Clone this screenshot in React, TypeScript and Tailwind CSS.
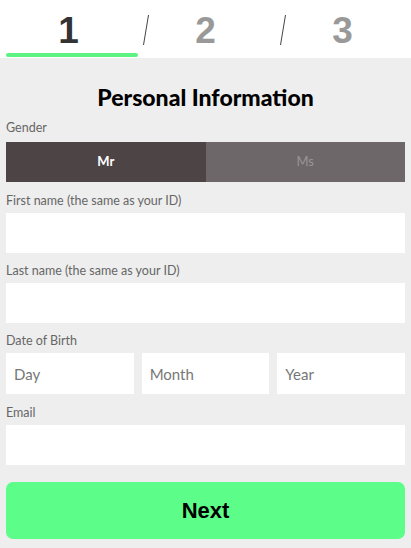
import React from 'react';

const labelCls = 'block text-[12.5px] leading-[16px] text-[#666] mb-[4px]';
const inputCls =
  'w-full h-[40px] bg-white px-[8px] text-[15px] text-[#333] placeholder:text-[#777] outline-none';

const App: React.FC = () => {
  return (
    <div className="w-[411px] min-h-[548px] bg-[#eeeeee] font-['Lato',sans-serif]">
      {/* step header */}
      <div className="relative h-[58px] bg-white grid grid-cols-3">
        {['1', '2', '3'].map((n, i) => (
          <div key={n} className="relative flex items-start justify-center pt-[9px]">
            {i > 0 && (
              <svg className="absolute left-[5px] top-[14px]" width="8" height="32" viewBox="0 0 8 32">
                <line x1="6.5" y1="1" x2="1.5" y2="31" stroke="#444" strokeWidth="1" />
              </svg>
            )}
            <span
              className={`font-['Liberation_Sans',sans-serif] font-bold text-[37px] leading-[44px] ${
                i === 0 ? 'text-[#333]' : 'text-[#999]'
              }`}
            >
              {n}
            </span>
          </div>
        ))}
        <div className="absolute left-[6px] top-[53px] w-[132px] h-[4px] rounded-full bg-[#5cf383]" />
      </div>

      <div className="px-[6px] pb-[8px]">
        <h1 className="mt-[25px] text-center text-[23px] leading-[28px] font-black text-black">
          Personal Information
        </h1>

        <label className={labelCls + ' mt-[9px] !mb-[6px]'}>Gender</label>
        <div className="flex h-[40px]">
          <button className="flex-1 bg-[#4d4446] text-white text-[13px] font-bold">Mr</button>
          <button className="flex-1 bg-[#6d6769] text-[#9a9596] text-[13px]">Ms</button>
        </div>

        <label className={labelCls + ' mt-[11px]'}>First name (the same as your ID)</label>
        <input className={inputCls} />

        <label className={labelCls + ' mt-[10px]'}>Last name (the same as your ID)</label>
        <input className={inputCls} />

        <label className={labelCls + ' mt-[10px]'}>Date of Birth</label>
        <div className="grid grid-cols-3 gap-[8px]">
          <input className={inputCls + ' h-[41px]'} placeholder="Day" />
          <input className={inputCls + ' h-[41px]'} placeholder="Month" />
          <input className={inputCls + ' h-[41px]'} placeholder="Year" />
        </div>

        <label className={labelCls + ' mt-[11px]'}>Email</label>
        <input className={inputCls} />

        <button className="mt-[17px] w-full h-[57px] rounded-[7px] bg-[#5cfd88] text-black text-[22px] font-bold font-['Liberation_Sans',sans-serif]">
          Next
        </button>
      </div>
    </div>
  );
};

export default App;
